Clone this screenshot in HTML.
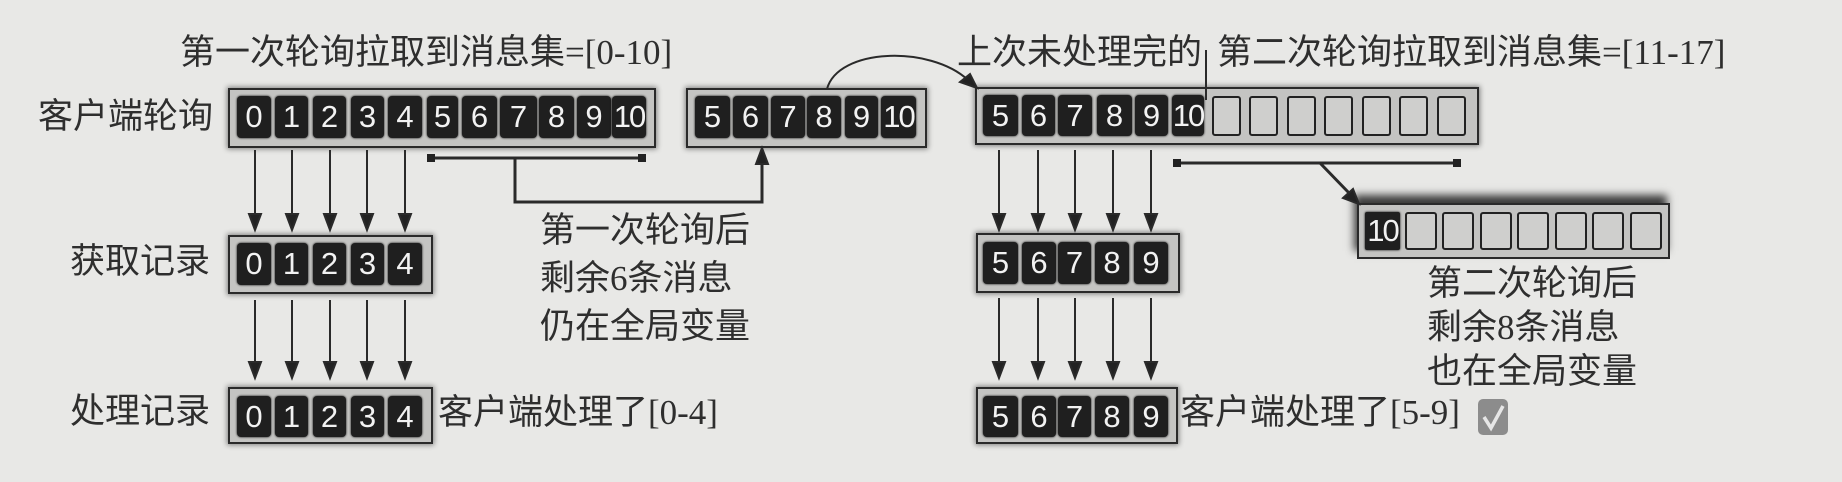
<!DOCTYPE html>
<html><head><meta charset="utf-8">
<style>
body{margin:0;width:1842px;height:482px;background:#e8e8e6;position:relative;overflow:hidden;font-family:"Liberation Serif","Noto Sans CJK SC",sans-serif;color:#2e2e2e}
.t{position:absolute;font-size:35px;line-height:42px;white-space:nowrap;font-family:"Liberation Serif","Noto Sans CJK SC",sans-serif}
.box{position:absolute;background:#c4c4c2;border:2px solid #2a2a2a;box-shadow:0 0 5px 1px rgba(0,0,0,.45);box-sizing:border-box}
.c{position:absolute;background:#1f1f1f;border-radius:4px;color:#f2f2f2;font-family:"Liberation Sans",sans-serif;font-size:31px;text-align:center;box-shadow:0 0 2px #000}
.e{position:absolute;background:#cfcfcd;border:2px solid #222;border-radius:3px;box-sizing:border-box}
svg{position:absolute;left:0;top:0}
</style></head><body>

<!-- texts -->
<div class="t" style="left:180px;top:32px">第一次轮询拉取到消息集=[0-10]</div>
<div class="t" style="left:38px;top:96px">客户端轮询</div>
<div class="t" style="left:70px;top:241px">获取记录</div>
<div class="t" style="left:70px;top:391px">处理记录</div>
<div class="t" style="left:540px;top:207px;line-height:48px">第一次轮询后<br>剩余6条消息<br>仍在全局变量</div>
<div class="t" style="left:438px;top:392px">客户端处理了[0-4]</div>
<div class="t" style="left:957px;top:32px">上次未处理完的</div>
<div class="t" style="left:1217px;top:32px">第二次轮询拉取到消息集=[11-17]</div>
<div class="t" style="left:1427px;top:262px;line-height:44px">第二次轮询后<br>剩余8条消息<br>也在全局变量</div>
<div class="t" style="left:1180px;top:392px">客户端处理了[5-9]</div>
<div style="position:absolute;left:1478px;top:399px;width:30px;height:36px;background:#8c8c8c;border-radius:5px"></div>
<svg width="1842" height="482" style="z-index:2"><path d="M1484 417 L1491 428 L1503 406" stroke="#e6e6e6" stroke-width="3.5" fill="none"/></svg>

<!-- Box A -->
<div class="box" style="left:228px;top:88px;width:428px;height:60px"></div>
<div class="c" style="left:237px;top:96px;width:34px;height:42px;line-height:42px">0</div>
<div class="c" style="left:275px;top:96px;width:33px;height:42px;line-height:42px">1</div>
<div class="c" style="left:313px;top:96px;width:33px;height:42px;line-height:42px">2</div>
<div class="c" style="left:351px;top:96px;width:33px;height:42px;line-height:42px">3</div>
<div class="c" style="left:388px;top:96px;width:34px;height:42px;line-height:42px">4</div>
<div class="c" style="left:427px;top:96px;width:31px;height:42px;line-height:42px">5</div>
<div class="c" style="left:462px;top:96px;width:35px;height:42px;line-height:42px">6</div>
<div class="c" style="left:500px;top:96px;width:37px;height:42px;line-height:42px">7</div>
<div class="c" style="left:539px;top:96px;width:35px;height:42px;line-height:42px">8</div>
<div class="c" style="left:577px;top:96px;width:34px;height:42px;line-height:42px">9</div>
<div class="c" style="left:612px;top:96px;width:34px;height:42px;line-height:42px;letter-spacing:-2px">10</div>

<!-- Box B -->
<div class="box" style="left:686px;top:88px;width:241px;height:60px"></div>
<div class="c" style="left:695px;top:96px;width:35px;height:42px;line-height:42px">5</div>
<div class="c" style="left:733px;top:96px;width:35px;height:42px;line-height:42px">6</div>
<div class="c" style="left:771px;top:96px;width:34px;height:42px;line-height:42px">7</div>
<div class="c" style="left:807px;top:96px;width:34px;height:42px;line-height:42px">8</div>
<div class="c" style="left:845px;top:96px;width:33px;height:42px;line-height:42px">9</div>
<div class="c" style="left:881px;top:96px;width:35px;height:42px;line-height:42px;letter-spacing:-2px">10</div>

<!-- Box C -->
<div class="box" style="left:975px;top:87px;width:504px;height:58px"></div>
<div class="c" style="left:983px;top:95px;width:35px;height:41px;line-height:41px">5</div>
<div class="c" style="left:1022px;top:95px;width:33px;height:41px;line-height:41px">6</div>
<div class="c" style="left:1058px;top:95px;width:34px;height:41px;line-height:41px">7</div>
<div class="c" style="left:1097px;top:95px;width:35px;height:41px;line-height:41px">8</div>
<div class="c" style="left:1135px;top:95px;width:33px;height:41px;line-height:41px">9</div>
<div class="c" style="left:1172px;top:95px;width:32px;height:41px;line-height:41px;letter-spacing:-2px">10</div>
<div class="e" style="left:1212px;top:96px;width:29px;height:40px"></div>
<div class="e" style="left:1249px;top:96px;width:29px;height:40px"></div>
<div class="e" style="left:1287px;top:96px;width:29px;height:40px"></div>
<div class="e" style="left:1324px;top:96px;width:29px;height:40px"></div>
<div class="e" style="left:1362px;top:96px;width:29px;height:40px"></div>
<div class="e" style="left:1399px;top:96px;width:29px;height:40px"></div>
<div class="e" style="left:1437px;top:96px;width:29px;height:40px"></div>

<!-- Box D -->
<div class="box" style="left:1357px;top:203px;width:313px;height:56px;box-shadow:-3px -8px 8px 0 rgba(0,0,0,.75)"></div>
<div class="c" style="left:1365px;top:212px;width:35px;height:38px;line-height:38px;letter-spacing:-2px;border-radius:2px">10</div>
<div class="e" style="left:1405px;top:212px;width:32px;height:38px"></div>
<div class="e" style="left:1442px;top:212px;width:32px;height:38px"></div>
<div class="e" style="left:1480px;top:212px;width:32px;height:38px"></div>
<div class="e" style="left:1517px;top:212px;width:32px;height:38px"></div>
<div class="e" style="left:1555px;top:212px;width:32px;height:38px"></div>
<div class="e" style="left:1592px;top:212px;width:32px;height:38px"></div>
<div class="e" style="left:1630px;top:212px;width:32px;height:38px"></div>

<!-- Box E -->
<div class="box" style="left:228px;top:235px;width:205px;height:59px"></div>
<div class="c" style="left:237px;top:243px;width:34px;height:42px;line-height:42px">0</div>
<div class="c" style="left:275px;top:243px;width:33px;height:42px;line-height:42px">1</div>
<div class="c" style="left:313px;top:243px;width:33px;height:42px;line-height:42px">2</div>
<div class="c" style="left:351px;top:243px;width:33px;height:42px;line-height:42px">3</div>
<div class="c" style="left:388px;top:243px;width:34px;height:42px;line-height:42px">4</div>

<!-- Box F -->
<div class="box" style="left:228px;top:387px;width:205px;height:57px"></div>
<div class="c" style="left:237px;top:396px;width:34px;height:41px;line-height:41px">0</div>
<div class="c" style="left:275px;top:396px;width:33px;height:41px;line-height:41px">1</div>
<div class="c" style="left:313px;top:396px;width:33px;height:41px;line-height:41px">2</div>
<div class="c" style="left:351px;top:396px;width:33px;height:41px;line-height:41px">3</div>
<div class="c" style="left:388px;top:396px;width:34px;height:41px;line-height:41px">4</div>

<!-- Box G -->
<div class="box" style="left:976px;top:233px;width:204px;height:60px"></div>
<div class="c" style="left:983px;top:242px;width:35px;height:42px;line-height:42px">5</div>
<div class="c" style="left:1022px;top:242px;width:34px;height:42px;line-height:42px">6</div>
<div class="c" style="left:1058px;top:242px;width:33px;height:42px;line-height:42px">7</div>
<div class="c" style="left:1095px;top:242px;width:34px;height:42px;line-height:42px">8</div>
<div class="c" style="left:1134px;top:242px;width:34px;height:42px;line-height:42px">9</div>

<!-- Box H -->
<div class="box" style="left:976px;top:387px;width:202px;height:57px"></div>
<div class="c" style="left:983px;top:396px;width:35px;height:41px;line-height:41px">5</div>
<div class="c" style="left:1022px;top:396px;width:34px;height:41px;line-height:41px">6</div>
<div class="c" style="left:1058px;top:396px;width:33px;height:41px;line-height:41px">7</div>
<div class="c" style="left:1095px;top:396px;width:34px;height:41px;line-height:41px">8</div>
<div class="c" style="left:1134px;top:396px;width:34px;height:41px;line-height:41px">9</div>

<svg width="1842" height="482">
<defs>
<marker id="a" markerWidth="12" markerHeight="16" refX="6" refY="14" orient="auto-start-reverse" markerUnits="userSpaceOnUse"><path d="M0 0 L12 0 L6 16 Z" fill="#222" transform="rotate(0)"/></marker>
</defs>
<g stroke="#2a2a2a" stroke-width="2" fill="#222">
<!-- left arrows -->
<g id="la">
<line x1="255" y1="150" x2="255" y2="216"/><path d="M249 214 L261 214 L255 230 Z"/>
<line x1="292" y1="150" x2="292" y2="216"/><path d="M286 214 L298 214 L292 230 Z"/>
<line x1="330" y1="150" x2="330" y2="216"/><path d="M324 214 L336 214 L330 230 Z"/>
<line x1="367" y1="150" x2="367" y2="216"/><path d="M361 214 L373 214 L367 230 Z"/>
<line x1="405" y1="150" x2="405" y2="216"/><path d="M399 214 L411 214 L405 230 Z"/>
</g>
<line x1="255" y1="300" x2="255" y2="364"/><path d="M249 362 L261 362 L255 378 Z"/>
<line x1="292" y1="300" x2="292" y2="364"/><path d="M286 362 L298 362 L292 378 Z"/>
<line x1="330" y1="300" x2="330" y2="364"/><path d="M324 362 L336 362 L330 378 Z"/>
<line x1="367" y1="300" x2="367" y2="364"/><path d="M361 362 L373 362 L367 378 Z"/>
<line x1="405" y1="300" x2="405" y2="364"/><path d="M399 362 L411 362 L405 378 Z"/>
<!-- right arrows -->
<line x1="999" y1="150" x2="999" y2="216"/><path d="M993 214 L1005 214 L999 230 Z"/>
<line x1="1038" y1="150" x2="1038" y2="216"/><path d="M1032 214 L1044 214 L1038 230 Z"/>
<line x1="1075" y1="150" x2="1075" y2="216"/><path d="M1069 214 L1081 214 L1075 230 Z"/>
<line x1="1113" y1="150" x2="1113" y2="216"/><path d="M1107 214 L1119 214 L1113 230 Z"/>
<line x1="1151" y1="150" x2="1151" y2="216"/><path d="M1145 214 L1157 214 L1151 230 Z"/>
<line x1="999" y1="298" x2="999" y2="364"/><path d="M993 362 L1005 362 L999 378 Z"/>
<line x1="1038" y1="298" x2="1038" y2="364"/><path d="M1032 362 L1044 362 L1038 378 Z"/>
<line x1="1075" y1="298" x2="1075" y2="364"/><path d="M1069 362 L1081 362 L1075 378 Z"/>
<line x1="1113" y1="298" x2="1113" y2="364"/><path d="M1107 362 L1119 362 L1113 378 Z"/>
<line x1="1151" y1="298" x2="1151" y2="364"/><path d="M1145 362 L1157 362 L1151 378 Z"/>
<!-- bracket 1 -->
<line x1="431" y1="158" x2="642" y2="158" stroke-width="3"/>
<rect x="427" y="154" width="8" height="8" stroke="none"/><rect x="638" y="154" width="8" height="8" stroke="none"/>
<polyline points="515,158 515,202 762,202 762,162" fill="none" stroke-width="3"/>
<path d="M756 164 L768 164 L762 148 Z"/>
<!-- curve -->
<path d="M827 89 C 838 48, 930 45, 968 80" fill="none" stroke-width="2"/>
<path d="M960 82 L970 74 L977 88 Z"/>
<line x1="1206" y1="50" x2="1206" y2="100"/>
<!-- bracket 2 -->
<line x1="1177" y1="163" x2="1457" y2="163" stroke-width="3"/>
<rect x="1173" y="159" width="8" height="8" stroke="none"/><rect x="1453" y="159" width="8" height="8" stroke="none"/>
<line x1="1320" y1="163" x2="1350" y2="194" stroke-width="3"/>
<path d="M1343 198 L1353 189 L1359 204 Z"/>
</g>
</svg>
</body></html>
